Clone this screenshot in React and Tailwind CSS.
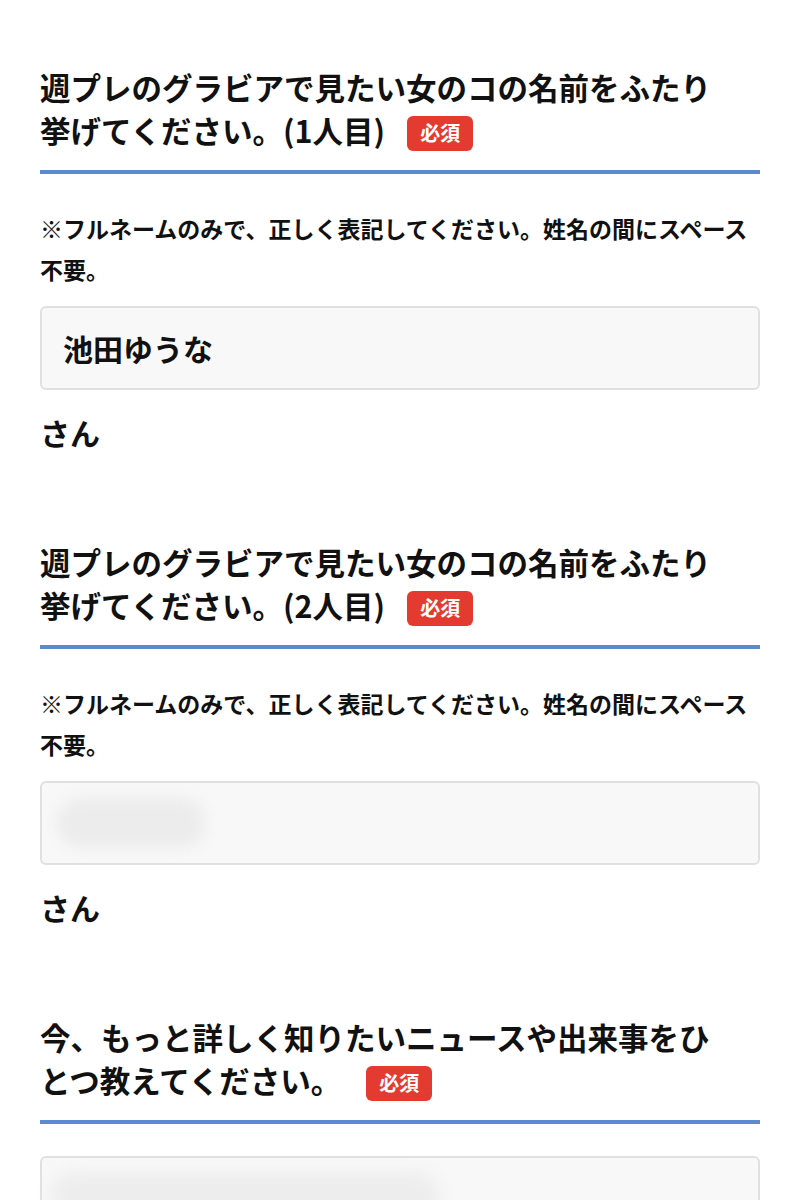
import React from "react";

const font = { fontFamily: '"Noto Sans CJK JP", "Noto Sans", sans-serif' };

function Badge({ ml = "ml-[22px]" }) {
  return (
    <span className={`${ml} inline-flex h-[35px] items-center rounded-[6px] bg-[#e33b2f] px-[13px] align-[2px] text-[20px] font-bold leading-none text-white`}>
      必須
    </span>
  );
}

function Title({ children, ml }) {
  return (
    <div className="pr-[40px] text-[30.5px] font-bold leading-[43px] text-[#111]">
      {children}
      <Badge ml={ml} />
    </div>
  );
}

function Note() {
  return (
    <div className="mt-[34px] text-[23px] font-bold leading-[41px] text-[#111]">
      ※フルネームのみで、正しく表記してください。姓名の間にスペース不要。
    </div>
  );
}

function Rule() {
  return <div className="mt-[18px] h-[4px] w-full bg-[#5a8bd0]" />;
}

export default function App() {
  return (
    <div className="min-h-[1200px] w-full overflow-hidden bg-white px-[40px] pt-[66px]" style={font}>
      {/* Q1 */}
      <Title>週プレのグラビアで見たい女のコの名前をふたり挙げてください。(1人目)</Title>
      <Rule />
      <Note />
      <div className="mt-[16px] flex h-[84px] items-center rounded-[6px] border-2 border-[#e0e0e0] bg-[#f8f8f8] px-[21px]">
        <span className="text-[30px] font-bold text-[#111]">池田ゆうな</span>
      </div>
      <div className="mt-[22px] text-[30px] font-bold leading-[40px] text-[#111]">さん</div>

      {/* Q2 */}
      <div className="mt-[89px]">
        <Title>週プレのグラビアで見たい女のコの名前をふたり挙げてください。(2人目)</Title>
      </div>
      <Rule />
      <Note />
      <div className="mt-[16px] flex h-[84px] items-center rounded-[6px] border-2 border-[#e0e0e0] bg-[#f8f8f8] px-[14px]">
        <div className="h-[50px] w-[150px] rounded-full bg-[#ececec] blur-[7px]" />
      </div>
      <div className="mt-[22px] text-[30px] font-bold leading-[40px] text-[#111]">さん</div>

      {/* Q3 */}
      <div className="mt-[89px]">
        <Title ml="ml-[25px]">今、もっと詳しく知りたいニュースや出来事をひとつ教えてください。</Title>
      </div>
      <Rule />
      <div className="mt-[32px] flex h-[84px] items-start rounded-[6px] border-2 border-[#e0e0e0] bg-[#f8f8f8] px-[8px] pt-[14px]">
        <div className="h-[50px] w-[390px] rounded-full bg-[#ededed] blur-[8px]" />
      </div>
    </div>
  );
}
